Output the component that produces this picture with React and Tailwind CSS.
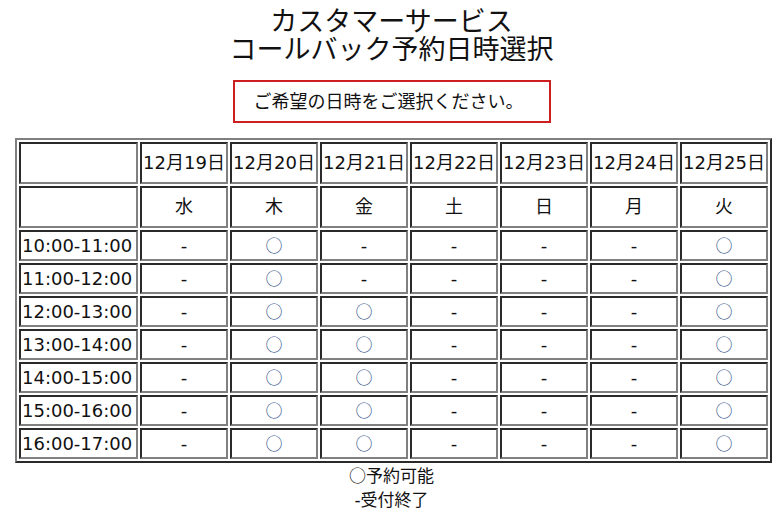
const FONT = '"DejaVu Sans", "Noto Sans CJK JP", sans-serif';
const CJK = '"Noto Sans CJK JP", sans-serif';

const dates = ['12月19日', '12月20日', '12月21日', '12月22日', '12月23日', '12月24日', '12月25日'];
const days = ['水', '木', '金', '土', '日', '月', '火'];

const slots = [
  { time: '10:00-11:00', open: [false, true, false, false, false, false, true] },
  { time: '11:00-12:00', open: [false, true, false, false, false, false, true] },
  { time: '12:00-13:00', open: [false, true, true, false, false, false, true] },
  { time: '13:00-14:00', open: [false, true, true, false, false, false, true] },
  { time: '14:00-15:00', open: [false, true, true, false, false, false, true] },
  { time: '15:00-16:00', open: [false, true, true, false, false, false, true] },
  { time: '16:00-17:00', open: [false, true, true, false, false, false, true] },
];

const cell =
  'border-2 border-t-[#2a2a2a] border-l-[#2a2a2a] border-b-[#808080] border-r-[#808080] bg-white p-[1px] text-[18px] leading-[22px] text-[#111]';

export default function App() {
  return (
    <div className="min-h-[523px] w-[783px] bg-white text-black" style={{ fontFamily: FONT }}>
      {/* Title */}
      <h1 className="pt-[8px] text-center text-[27px] leading-[28px] font-normal text-[#111]">
        カスタマーサービス
        <br />
        コールバック予約日時選択
      </h1>

      {/* Notice */}
      <div className="mx-auto mt-[16px] flex h-[43px] w-[318px] items-center justify-center border-2 border-[#cc1f1f] pr-[6px] text-[18px] text-[#111]">
        ご希望の日時をご選択ください。
      </div>

      {/* Calendar */}
      <table className="mt-[15px] ml-[15px] w-[757px] table-fixed border-separate border-spacing-[2px] border-2 border-t-[#808080] border-l-[#808080] border-b-[#2a2a2a] border-r-[#2a2a2a]">
        <colgroup>
          <col className="w-[119px]" />
          {dates.map((d) => (
            <col key={d} className="w-[88px]" />
          ))}
        </colgroup>
        <tbody>
          <tr className="h-[42px]">
            <td className={cell}></td>
            {dates.map((d) => (
              <td key={d} className={`${cell} text-center whitespace-nowrap`}>
                {d}
              </td>
            ))}
          </tr>
          <tr className="h-[42px]">
            <td className={cell}></td>
            {days.map((d) => (
              <td key={d} className={`${cell} text-center`}>
                {d}
              </td>
            ))}
          </tr>
          {slots.map((s) => (
            <tr key={s.time} className="h-[31px]">
              <td className={`${cell} text-left whitespace-nowrap`}>{s.time}</td>
              {s.open.map((o, i) => (
                <td key={i} className={`${cell} text-center`}>
                  {o ? (
                    <span className="text-[17px] text-[#35568a]" style={{ fontFamily: CJK }}>
                      ○
                    </span>
                  ) : (
                    '-'
                  )}
                </td>
              ))}
            </tr>
          ))}
        </tbody>
      </table>

      {/* Legend */}
      <div className="text-center text-[17px] leading-[24px] text-[#111]">
        <p>
          <span style={{ fontFamily: CJK }}>○</span>予約可能
        </p>
        <p>-受付終了</p>
      </div>
    </div>
  );
}
